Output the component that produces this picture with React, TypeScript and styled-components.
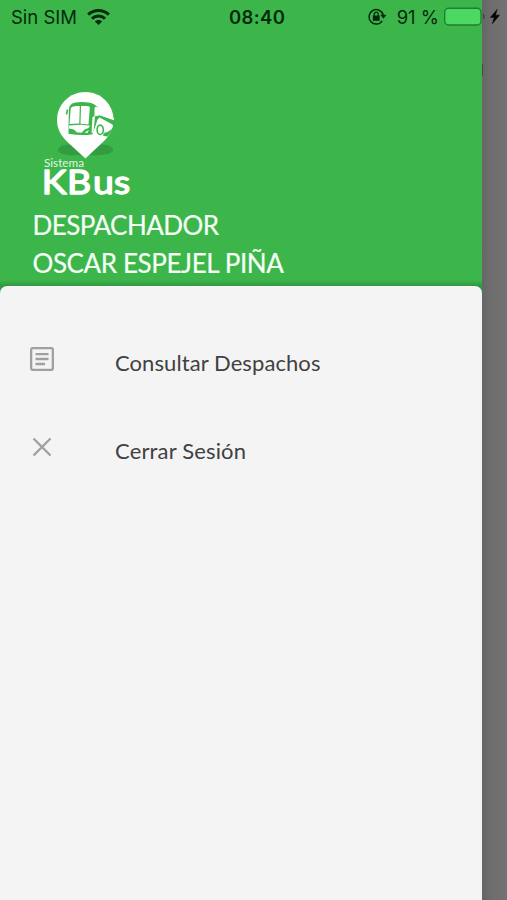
import React from "react";
import styled, { createGlobalStyle } from "styled-components";

const GlobalStyle = createGlobalStyle`
  *, *::before, *::after { box-sizing: border-box; }
  html, body { margin: 0; padding: 0; }
  body { font-family: Lato, sans-serif; overflow: hidden; }
`;

const Screen = styled.div`
  position: relative;
  display: flex;
  width: 507px;
  height: 900px;
  overflow: hidden;
  background: #727272;
`;

const StatusBar = styled.div`
  position: absolute;
  inset: 0 0 auto 0;
  z-index: 2;
  display: grid;
  grid-template-columns: 218px 1fr auto;
  align-items: center;
  height: 34px;
  padding: 0 6px 0 11px;
  color: #06290c;
  font-family: Inter, sans-serif;
`;

const StatusGroup = styled.div<{ $gap: number }>`
  display: flex;
  align-items: center;
  gap: ${({ $gap }) => $gap}px;
`;

const StatusIcon = styled.svg`
  display: block;
  flex: none;
  overflow: visible;
`;

const StatusText = styled.span<{ $size: number; $weight?: number; $spacing?: number }>`
  font-size: ${({ $size }) => $size}px;
  font-weight: ${({ $weight }) => $weight ?? 400};
  letter-spacing: ${({ $spacing }) => $spacing ?? 0}px;
  line-height: 33px;
  white-space: nowrap;
`;

const Drawer = styled.aside`
  display: flex;
  flex-direction: column;
  width: 481.5px;
  height: 900px;
  background: #3cb64a;
`;

const Backdrop = styled.div`
  flex: 1;
  padding-top: 64px;
  background: linear-gradient(90deg, #666 0, #6d6d6d 8px, #737373 100%);
`;

const BackdropEdge = styled.div`
  width: 1px;
  height: 12px;
  background: #484848;
`;

const Header = styled.header`
  display: flex;
  flex-direction: column;
  height: 286px;
  padding: 86px 33px 0;
  color: #f6fff6;
  background: linear-gradient(180deg, #3cb64a 280px, #319640 286px);
`;

const Logo = styled.svg`
  display: block;
  flex: none;
  margin-left: 3px;
`;

const HeaderLine = styled.div<{ $spacing: number }>`
  height: 38px;
  margin-left: -0.5px;
  font-size: 26px;
  line-height: 38px;
  letter-spacing: ${({ $spacing }) => $spacing}px;
  white-space: nowrap;
  -webkit-text-stroke: 0.2px currentColor;
`;

const PanelWell = styled.div`
  flex: 1;
  background: linear-gradient(180deg, #319640 0, #3cb64a 8px);
`;

const Panel = styled.nav`
  height: 100%;
  padding-top: 31.5px;
  background: #f4f4f4;
  border-radius: 7px 7px 0 0;
`;

const MenuItem = styled.a`
  display: grid;
  grid-template-columns: 85px 1fr;
  align-items: center;
  height: 88.5px;
  padding-left: 30px;
  color: #414141;
`;

const MenuIcon = styled.svg`
  display: block;
  margin-bottom: 6px;
`;

const MenuLabel = styled.span<{ $spacing: number }>`
  padding-top: 2px;
  font-size: 22px;
  line-height: 28px;
  letter-spacing: ${({ $spacing }) => $spacing}px;
  white-space: nowrap;
`;

function KBusLogo() {
  return (
    <Logo width="110" height="120" viewBox="36 86 110 120">
      <path d="M58 149c3-6 15-5 22-3l5 9c-13 1-29 0-27-6zM113 149c-3-6-16-5-23-3l-5 9c13 1 30 0 28-6z" fill="#329d40" />
      <path d="M85.400 92C69.500 92 57 104.500 57 120c0 9 4 16 11 22.500L85.400 158.500 103 142c7-7 10.500-13 10.500-22 0-15.500-12.500-28-28.100-28z" fill="#fff" />
      <path d="M69 108q1-5.500 9-5.800 11-.5 16 2l20 15.500-1.500 2-13-5.500-7 18q-11 2-24-.5v-9z" fill="#3cb64a" />
      <path d="M95 107.500l3.200-.2 16 11.200-.7 2.200-14-5-4 .2z" fill="#fff" />
      <path d="M98.500 115l16 5.500v5.500l-14-6z" fill="#3cb64a" />
      <path d="M97.500 119.500l3-1.500 12 6.500-3.500 7-4 2-12 .5z" fill="#fff" />
      <path d="M103.500 133l4-1 6-4-5.800 8.500-4.500-.5z" fill="#3cb64a" />
      <path d="M94.500 108q1.800-2.500 3 0v7.500l-3 1z" fill="#fff" />
      <path d="M70.800 108q1.500-1.800 6-2h3l-.5 17.500-9.800.5zM81 106h6.500q2.500 0 2.300 2l-1.300 16.500-8-.7z" fill="#fff" />
      <path d="M69 125.500l12-.7 9 1q-1 2.500-5 3.500l-3.500 3.500-5-.5q-1-3-7.500-3.800z" fill="#fff" />
      <path d="M84.500 132.500l4.500-2.500-1.500 3z" fill="#fff" />
      <path d="M92.500 117l2.500-1-1.500 16.500-2 .5z" fill="#fff" />
      <ellipse cx="100.200" cy="129.800" rx="3.100" ry="4.700" fill="#fff" stroke="#3cb64a" strokeWidth="1.600" />
      <path d="M67.500 109.500l-1 5" stroke="#3cb64a" strokeWidth="1.600" />
      <text x="44" y="166.500" textLength="40" lengthAdjust="spacingAndGlyphs" fill="#e1f5e2" fontFamily="Lato" fontSize="11">Sistema</text>
      <text transform="scale(1.15 1)" x="36.400 58.300 80.900 99.200" y="193.700" fill="#fff" stroke="#fff" strokeWidth="1.400" strokeLinejoin="round" fontFamily="Lato" fontWeight="400" fontSize="32.500">KBus</text>
    </Logo>
  );
}

function WifiIcon() {
  return (
    <StatusIcon width="23" height="17" viewBox="0 0 23 17" fill="none" stroke="currentColor" strokeWidth="3">
      <path d="M1.200 5.700c5.800-5.600 14.800-5.600 20.600 0M5 9.600c3.700-3.500 9.300-3.500 13 0" />
      <path d="M7.900 12.500c2-2 5.200-2 7.200 0l-3.600 3.600z" fill="currentColor" stroke="none" />
    </StatusIcon>
  );
}

function RotationLockIcon() {
  return (
    <StatusIcon width="19" height="18" viewBox="0 0 19 18">
      <path d="M14.200 12.900A7.200 7.200 0 1 1 15.200 7" fill="none" stroke="currentColor" strokeWidth="1.500" />
      <path d="M12.200 6.700h6.300l-3.100 4.100z" fill="currentColor" />
      <path d="M4.800 7.500h6.900v5.300H4.800z" fill="currentColor" />
      <path d="M6.300 8V6.100a1.950 1.950 0 0 1 3.900 0V8" fill="none" stroke="currentColor" strokeWidth="1.300" />
    </StatusIcon>
  );
}

function BatteryIcon() {
  return (
    <StatusIcon width="57" height="20" viewBox="0 0 57 20">
      <rect x=".7" y="1.300" width="36.300" height="16.700" rx="4" fill="#4bd964" stroke="#237e30" strokeWidth="1.400" />
      <path d="M39 6.600q2 .6 2 3t-2 3z" fill="#4b4b4b" />
      <path d="M53.200 2.300L46.300 10.500h4l-2 6.200 7.200-8.500h-4z" fill="#050505" stroke="#050505" strokeWidth=".5" />
    </StatusIcon>
  );
}

export default function App() {
  return (
    <>
      <GlobalStyle />
      <Screen>
        <StatusBar>
          <StatusGroup $gap={10}>
            <StatusText $size={18.5}>Sin SIM</StatusText>
            <WifiIcon />
          </StatusGroup>
          <StatusText $size={18.5} $weight={600} $spacing={0.35}>08:40</StatusText>
          <StatusGroup $gap={5}>
            <StatusGroup $gap={10}>
              <RotationLockIcon />
              <StatusText $size={18.5}>91 %</StatusText>
            </StatusGroup>
            <BatteryIcon />
          </StatusGroup>
        </StatusBar>
        <Drawer>
          <Header>
            <KBusLogo />
            <HeaderLine $spacing={-0.55}>DESPACHADOR</HeaderLine>
            <HeaderLine $spacing={-0.4}>OSCAR ESPEJEL PIÑA</HeaderLine>
          </Header>
          <PanelWell>
            <Panel>
              <MenuItem>
                <MenuIcon width="24" height="24" viewBox="0 0 24 24" fill="none" stroke="#a0a0a0" strokeWidth="2.300">
                  <rect x="1.150" y="1.150" width="21.700" height="21.700" rx="1.500" />
                  <path d="M5.500 7.200h13M5.500 12h13M5.500 17h9.500" />
                </MenuIcon>
                <MenuLabel $spacing={0.08}>Consultar Despachos</MenuLabel>
              </MenuItem>
              <MenuItem>
                <MenuIcon width="24" height="24" viewBox="0 0 24 24" fill="none" stroke="#a0a0a0" strokeWidth="2.300">
                  <path d="M3.500 3.500l17 17M20.500 3.500l-17 17" />
                </MenuIcon>
                <MenuLabel $spacing={0.16}>Cerrar Sesión</MenuLabel>
              </MenuItem>
            </Panel>
          </PanelWell>
        </Drawer>
        <Backdrop>
          <BackdropEdge />
        </Backdrop>
      </Screen>
    </>
  );
}
